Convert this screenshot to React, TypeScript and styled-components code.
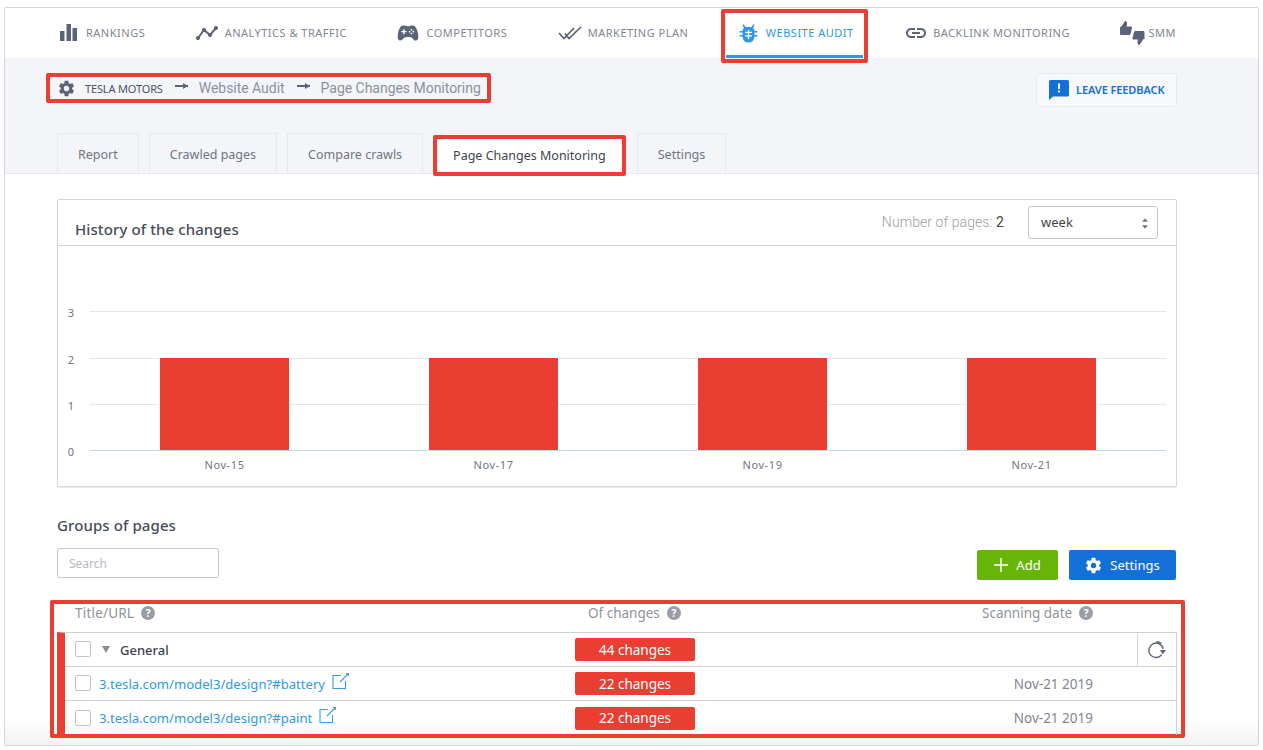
import React from 'react';
import styled, {createGlobalStyle} from 'styled-components';
import {IoGameController, IoSettingsSharp} from 'react-icons/io5';
import {MdLink} from 'react-icons/md';

const red = '#ea3e32';
const slate = '#5b6378';

const GlobalStyle = createGlobalStyle`
    html, body {
        margin: 0;
        height: 750px;
        overflow: hidden;
        background: #fff;
        font-family: 'Noto Sans', 'Open Sans', sans-serif;
    }
    * {
        box-sizing: border-box;
    }
`

const BarsIcon = () => (
    <svg width="17" height="17" viewBox="0 0 17 17" fill={slate}>
        <rect x="0" y="7" width="4.5" height="10"/>
        <rect x="6.5" y="0" width="4.5" height="17"/>
        <rect x="12.5" y="4" width="4.5" height="13"/>
    </svg>
);

const TrendIcon = () => (
    <svg width="22" height="14" viewBox="0 0 22 14" fill={slate} stroke={slate}>
        <path d="M2 12 L8 4 L14 9 L20 2" fill="none" strokeWidth="2"/>
        <circle cx="2" cy="12" r="1.6"/>
        <circle cx="8" cy="4" r="1.6"/>
        <circle cx="14" cy="9" r="1.6"/>
        <circle cx="20" cy="2" r="1.6"/>
    </svg>
);

const DoubleCheckIcon = () => (
    <svg width="24" height="14" viewBox="0 0 24 14" fill="none" stroke={slate} strokeWidth="1.7">
        <path d="M1 7 L6 12.5 L16 2"/>
        <path d="M7 7.5 L11 12.5 L23 1"/>
    </svg>
);

const BugIcon = () => (
    <svg width="19" height="20" viewBox="0 0 18 20" fill="#2c96f0">
        <path d="M4 1 L6 4 H12 L14 1 L15 2 L13.5 5 Q15 6 15 8 H18 V9.500 H15 V12 H18 V13.500 H15 Q14.500 19.500 9 19.500 Q3.500 19.500 3 13.500 H0 V12 H3 V9.500 H0 V8 H3 Q3 6 4.500 5 L3 2 Z"/>
        <path d="M5.500 8.700 H12.500 V10 H5.500 Z M5.500 12.300 H12.500 V13.600 H5.500 Z M8.300 7 H9.700 V16 H8.300 Z" fill="#fff"/>
    </svg>
);

const ThumbShape = "M0 6 H1 L5 0 Q7.500 0 7 4 L6.500 5.500 H11 Q12.500 5.500 12 7 L10.500 13 Q10 14 9 14 H1 Q0 14 0 13 Z";

const ThumbsIcon = () => (
    <ThumbsSvg width="25" height="24" viewBox="0 0 25 24" fill={slate}>
        <path d={ThumbShape}/>
        <path d={ThumbShape} transform="translate(12 10) rotate(180 6.250 7)"/>
    </ThumbsSvg>
);

const FeedbackIcon = () => (
    <svg width="20" height="20" viewBox="0 0 20 20">
        <path d="M1.500 0 H18.500 Q20 0 20 1.500 V15 Q20 16.500 18.500 16.500 H4 L0 20 V1.500 Q0 0 1.500 0 Z" fill="#1270d8"/>
        <rect x="9" y="3.500" width="2" height="5.500" fill="#fff"/>
        <rect x="9" y="10.500" width="2" height="2" fill="#fff"/>
    </svg>
);

const ExternalIcon = () => (
    <ExternalSvg width="18" height="18" viewBox="0 0 18 18" fill="none" stroke="#3a9be8" strokeWidth="1.100">
        <path d="M9 3.500 H1 V16.500 H13.500 V9"/>
        <path d="M8 10 L16 2"/>
        <path d="M13.500 1 H17 V4.500 Z" fill="#3a9be8" stroke="none"/>
    </ExternalSvg>
);

const RefreshIcon = () => (
    <svg width="19" height="19" viewBox="0 0 18 18" fill="none" stroke={slate} strokeWidth="1.400">
        <path d="M15.200 8.500 A6.800 6.800 0 1 0 14 13.800"/>
        <path d="M9 1.700 A6.800 6.800 0 0 1 13.500 3.400"/>
        <path d="M12.300 9.500 L18 9.500 L15 13.500 Z" fill={slate} stroke="none"/>
    </svg>
);

const HelpDot = () => <Help>?</Help>;

const navItems = [
    {label: 'RANKINGS', icon: <BarsIcon/>, gap: 9},
    {label: 'ANALYTICS & TRAFFIC', icon: <TrendIcon/>, gap: 7},
    {label: 'COMPETITORS', icon: <IoGameController size={22} color={slate}/>, gap: 7},
    {label: 'MARKETING PLAN', icon: <DoubleCheckIcon/>, gap: 6},
    {label: 'WEBSITE AUDIT', icon: <BugIcon/>, gap: 8, active: true},
    {label: 'BACKLINK MONITORING', icon: <MdLink size={24} color={slate}/>, gap: 5},
    {label: 'SMM', icon: <ThumbsIcon/>, gap: 8},
];

const tabs = ['Report', 'Crawled pages', 'Compare crawls', 'Page Changes Monitoring', 'Settings'];

const yAxis = [
    {value: 3, y: 65},
    {value: 2, y: 112},
    {value: 1, y: 158},
    {value: 0, y: 204},
];
const bars = [
    {label: 'Nov-15', x: 102},
    {label: 'Nov-17', x: 371},
    {label: 'Nov-19', x: 640},
    {label: 'Nov-21', x: 909},
];

const rows = [
    {url: '3.tesla.com/model3/design?#battery', count: 22},
    {url: '3.tesla.com/model3/design?#paint', count: 22},
];

export default function App() {
    return (
        <>
            <GlobalStyle/>
            <Frame>
                <BottomFade/>
                <Nav>
                    {navItems.map(item => (
                        <NavItem key={item.label} $active={item.active} $gap={item.gap}>
                            {item.icon}
                            <span>{item.label}</span>
                        </NavItem>
                    ))}
                </Nav>
                <SubHeader>
                    <CrumbRow>
                        <Crumbs>
                            <IoSettingsSharp size={17} color={slate}/>
                            <CrumbRoot>TESLA MOTORS</CrumbRoot>
                            <Arrow/>
                            <Crumb>Website Audit</Crumb>
                            <Arrow/>
                            <Crumb>Page Changes Monitoring</Crumb>
                        </Crumbs>
                        <Feedback>
                            <FeedbackIcon/>
                            LEAVE FEEDBACK
                        </Feedback>
                    </CrumbRow>
                    <Tabs>
                        {tabs.map(tab => (
                            <Tab key={tab} $active={tab === 'Page Changes Monitoring'}>{tab}</Tab>
                        ))}
                    </Tabs>
                </SubHeader>
                <Content>
                    <Panel>
                        <PanelHead>
                            <PanelTitle>History of the changes</PanelTitle>
                            <PageCount>Number of pages: <b>2</b></PageCount>
                            <Select>
                                week
                                <Updown viewBox="0 0 7 12" width="6" height="11">
                                    <path d="M3.500 0 L7 4 H0 Z M3.500 12 L0 8 H7 Z" fill="#777"/>
                                </Updown>
                            </Select>
                        </PanelHead>
                        <svg width="1118" height="240" viewBox="0 0 1118 240">
                            {yAxis.map(a => (
                                <g key={a.value}>
                                    <line x1="32" x2="1108" y1={a.y + 0.5} y2={a.y + 0.5}
                                          stroke={a.value === 0 ? '#c5d8ec' : '#e6e6e6'}/>
                                    <text x="13" y={a.y + 6} fontSize="11" fill="#6f7585"
                                          textAnchor="middle" fontFamily="Noto Sans">{a.value}</text>
                                </g>
                            ))}
                            {bars.map(b => (
                                <g key={b.label}>
                                    <rect x={b.x - 1} y="111" width="131" height="93" fill="#fff"/>
                                    <rect x={b.x} y="112" width="129" height="92" fill={red}/>
                                    <text x={b.x + 64.5} y="223" fontSize="11" letterSpacing="0.6" fill="#6f7585"
                                          textAnchor="middle" fontFamily="Noto Sans">{b.label}</text>
                                </g>
                            ))}
                        </svg>
                    </Panel>
                    <SectionTitle>Groups of pages</SectionTitle>
                    <Toolbar>
                        <Search placeholder="Search"/>
                        <Actions>
                            <ActionButton $bg="#68b50a" $width="81px">
                                <svg width="14" height="14" viewBox="0 0 14 14" stroke="#fff" strokeWidth="1.500">
                                    <path d="M7 0 V14 M0 7 H14"/>
                                </svg>
                                Add
                            </ActionButton>
                            <ActionButton $bg="#1270d8" $width="107px">
                                <IoSettingsSharp size={17} color="#fff"/>
                                Settings
                            </ActionButton>
                        </Actions>
                    </Toolbar>
                    <TableFrame>
                        <HeadRow>
                            <HeadTitle>Title/URL <HelpDot/></HeadTitle>
                            <HeadChanges>Of changes <HelpDot/></HeadChanges>
                            <HeadDate>Scanning date <HelpDot/></HeadDate>
                        </HeadRow>
                        <Table>
                            <Row>
                                <TitleCell>
                                    <Check/>
                                    <Caret/>
                                    <GroupName>General</GroupName>
                                </TitleCell>
                                <Badge>44 changes</Badge>
                                <DateCell/>
                                <RefreshCell><RefreshIcon/></RefreshCell>
                            </Row>
                            {rows.map(r => (
                                <Row key={r.url}>
                                    <TitleCell>
                                        <Check/>
                                        <UrlLink>{r.url}</UrlLink>
                                        <ExternalIcon/>
                                    </TitleCell>
                                    <Badge>{r.count} changes</Badge>
                                    <DateCell>Nov-21 2019</DateCell>
                                    <RefreshCell $empty/>
                                </Row>
                            ))}
                        </Table>
                    </TableFrame>
                </Content>
            </Frame>
        </>
    );
}

const Frame = styled.div`
    position: relative;
    margin: 7px 4px 0;
    width: 1255px;
    height: 739px;
    border: 1px solid #d6d6d6;
    border-radius: 2px;
    overflow: hidden;
    background: #fff;
`
const Nav = styled.nav`
    display: flex;
    justify-content: space-between;
    height: 50px;
    padding: 0 82px 0 55px;
`
const NavItem = styled.div<{ $active?: boolean; $gap: number }>`
    position: relative;
    display: flex;
    align-items: center;
    gap: ${props => props.$gap}px;
    height: 50px;
    padding-bottom: 1px;
    font-size: 11px;
    letter-spacing: 0.5px;
    color: ${props => props.$active ? '#2c96f0' : '#7f8594'};

    ${props => props.$active && `
        &::before {
            content: '';
            position: absolute;
            left: -18px;
            right: -14px;
            top: 1px;
            height: 46px;
            border: 4px solid ${red};
            border-radius: 2px;
        }
        &::after {
            content: '';
            position: absolute;
            left: -13px;
            right: -9px;
            bottom: 0;
            height: 3px;
            background: #2c96f0;
        }
    `}
`
const ThumbsSvg = styled.svg`
    margin-right: -5px;
    margin-top: 1px;
`
const ExternalSvg = styled.svg`
    flex: none;
    margin-top: -6px;
`
const SubHeader = styled.div`
    height: 116px;
    background: #f4f5f9;
    border-bottom: 1px solid #e6e8ee;
    padding: 15px 81px 0 52px;
`
const CrumbRow = styled.div`
    display: flex;
    justify-content: space-between;
    align-items: flex-start;
`
const Crumbs = styled.div`
    display: flex;
    align-items: center;
    gap: 10px;
    height: 30px;
    margin-left: -11px;
    padding: 0 6px 0 8px;
    border: 4px solid ${red};
    border-radius: 2px;
    color: #8d919c;
`
const CrumbRoot = styled.span`
    font-size: 11px;
    letter-spacing: -0.15px;
    color: #4c5262;
`
const Crumb = styled.span`
    font-family: Roboto, sans-serif;
    font-size: 14px;
    letter-spacing: -0.03px;
`
const Arrow = styled.i`
    position: relative;
    display: block;
    width: 13px;
    height: 2px;
    margin: -4px 1px 0 2px;
    background: #5b6378;

    &::after {
        content: '';
        position: absolute;
        right: 0;
        top: -2px;
        border-left: 5px solid #5b6378;
        border-top: 3px solid transparent;
        border-bottom: 3px solid transparent;
    }
`
const Feedback = styled.div`
    display: flex;
    align-items: center;
    gap: 7px;
    width: 141px;
    height: 34px;
    padding: 0 0 1px 12px;
    background: #f7f8fb;
    border: 1px solid #e8eaf0;
    border-radius: 3px;
    font-size: 11px;
    letter-spacing: -0.1px;
    font-weight: 600;
    color: #1270d8;
`
const Tabs = styled.div`
    display: flex;
    gap: 10px;
    margin-top: 26px;
`
const Tab = styled.div<{ $active?: boolean }>`
    display: flex;
    align-items: center;
    height: 40px;
    padding: 2px 20px 0;
    font-size: 12.5px;
    white-space: nowrap;
    background: ${props => props.$active ? '#fff' : 'transparent'};
    color: ${props => props.$active ? '#3e4350' : '#70757f'};
    border: ${props => props.$active ? `4px solid ${red}` : '1px solid #e8eaf0'};
    border-bottom: ${props => props.$active ? `4px solid ${red}` : 'none'};
    ${props => props.$active && `
        height: 41px;
        margin: 2px 1px 0 0;
        padding: 0 16px;
        border-radius: 2px;
    `}
`
const Content = styled.div`
    position: relative;
    padding: 25px 81px 0 52px;
`
const Panel = styled.section`
    width: 1120px;
    height: 288px;
    border: 1px solid #d6d6d6;
    border-radius: 2px;
    box-shadow: 0 1px 1px #e8e8e8;
`
const PanelHead = styled.div`
    display: flex;
    align-items: center;
    height: 46px;
    padding: 0 18px 0 17px;
    border-bottom: 1px solid #d6d6d6;
`
const PanelTitle = styled.h3`
    flex: 1;
    margin: 13px 0 0;
    font-size: 15px;
    letter-spacing: 0.1px;
    font-weight: 500;
    color: #474c58;
`
const PageCount = styled.div`
    margin: -1px 24px 0 0;
    font-family: Roboto, sans-serif;
    font-size: 14px;
    letter-spacing: 0.08px;
    font-weight: 300;
    color: #9a9da5;

    b {
        font-weight: 400;
        color: #444;
    }
`
const Select = styled.div`
    display: flex;
    align-items: center;
    justify-content: space-between;
    width: 130px;
    height: 33px;
    padding: 0 9px 1px 12px;
    border: 1px solid #c8c8c8;
    border-radius: 3px;
    font-size: 13px;
    color: #444;
`
const Updown = styled.svg`
    display: block;
    margin-top: 2px;
`
const SectionTitle = styled.h3`
    margin: 28px 0 0;
    font-size: 15px;
    letter-spacing: 0.1px;
    line-height: 20px;
    font-weight: 500;
    color: #474c58;
`
const Toolbar = styled.div`
    display: flex;
    justify-content: space-between;
    align-items: flex-start;
    margin-top: 13px;
`
const Search = styled.input`
    width: 162px;
    height: 30px;
    padding: 0 11px;
    border: 1px solid #c8c8c8;
    border-radius: 2px;
    font-family: inherit;
    font-size: 12px;

    &::placeholder {
        color: #b5b8bf;
    }
`
const Actions = styled.div`
    display: flex;
    gap: 11px;
    margin-top: 2px;
    margin-right: 1px;
`
const ActionButton = styled.div<{ $bg: string; $width: string }>`
    display: flex;
    align-items: center;
    justify-content: center;
    gap: 8px;
    width: ${props => props.$width};
    height: 30px;
    background: ${props => props.$bg};
    border-radius: 2px;
    font-size: 13px;
    color: #fff;
`
const TableFrame = styled.div`
    width: 1135px;
    height: 138px;
    margin: 20px 0 0 -7px;
    border: 4px solid ${red};
    border-radius: 2px;
    padding: 0 4px 0 3px;
`
const HeadRow = styled.div`
    display: flex;
    align-items: center;
    height: 28px;
    padding-bottom: 10px;
    font-size: 13.5px;
    color: #8f939c;
`
const HeadTitle = styled.div`
    display: flex;
    align-items: center;
    gap: 7px;
    flex: none;
    width: 531px;
    padding-left: 18px;
    letter-spacing: 0.2px;
`
const HeadChanges = styled(HeadTitle)`
    width: 394px;
    padding-left: 0;
    letter-spacing: 0;
`
const HeadDate = styled(HeadChanges)`
    width: auto;
`
const Help = styled.span`
    display: flex;
    align-items: center;
    justify-content: center;
    width: 14px;
    height: 14px;
    border-radius: 50%;
    background: #9a9da6;
    color: #fff;
    font-size: 10px;
    font-weight: 700;
`
const Table = styled.div`
    width: 1120px;
    border-top: 1px solid #d0d0d0;
    border-right: 1px solid #d0d0d0;
    border-left: 8px solid ${red};
`
const Row = styled.div`
    display: grid;
    grid-template-columns: 510px 120px 442px 39px;
    height: 34px;
    align-items: center;
    border-bottom: 1px solid #d0d0d0;

    &:last-child {
        border-bottom: none;
    }
`
const TitleCell = styled.div`
    display: flex;
    align-items: center;
    padding-left: 10px;
`
const Check = styled.span`
    flex: none;
    width: 16px;
    height: 16px;
    margin-top: -1px;
    border: 1px solid #c4c4c4;
    border-radius: 2px;
    background: #fff;
`
const Caret = styled.span`
    margin-left: 11px;
    border-top: 7px solid #8a8d96;
    border-left: 4.500px solid transparent;
    border-right: 4.500px solid transparent;
`
const GroupName = styled.span`
    margin-left: 10px;
    font-size: 13px;
    font-weight: 500;
    color: #3e4350;
`
const UrlLink = styled.a`
    margin: 0 7px 0 8px;
    font-size: 13.1px;
    color: #2f9ae6;
`
const Badge = styled.div`
    display: flex;
    align-items: center;
    justify-content: center;
    height: 23px;
    background: ${red};
    border-radius: 2px;
    font-size: 13.5px;
    color: #fff;
`
const DateCell = styled.div`
    padding-right: 44px;
    text-align: right;
    font-size: 13.5px;
    color: #80848f;
`
const RefreshCell = styled.div<{ $empty?: boolean }>`
    display: flex;
    align-items: center;
    justify-content: center;
    height: 33px;
    padding-right: 2px;
    border-left: ${props => props.$empty ? 'none' : '1px solid #d8d8d8'};
`
const BottomFade = styled.div`
    position: absolute;
    left: 0;
    right: 0;
    bottom: 0;
    height: 26px;
    pointer-events: none;
    background: linear-gradient(rgba(244, 244, 244, 0), rgba(240, 240, 240, 0.85));
`
